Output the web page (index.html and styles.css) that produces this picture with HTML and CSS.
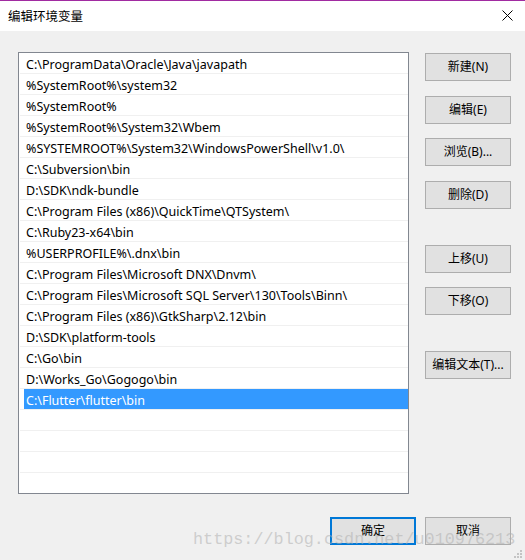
FILE: index.html
```html
<!DOCTYPE html>
<html lang="zh-CN">
<head>
<meta charset="utf-8">
<title>编辑环境变量</title>
<link rel="stylesheet" href="styles.css">
</head>
<body>
<div class="window">
  <div class="titlebar">
    <span class="title">编辑环境变量</span>
    <span class="close" aria-label="关闭">
      <svg width="11" height="11" viewBox="0 0 11 11"><path d="M0.5 0.5 L10.5 10.5 M10.5 0.5 L0.5 10.5" stroke="#000" stroke-width="1" fill="none"/></svg>
    </span>
  </div>
  <div class="content">
    <div class="main">
      <div class="list">
        <div class="row"><span class="cell">C:\ProgramData\Oracle\Java\javapath</span></div>
        <div class="row"><span class="cell">%SystemRoot%\system32</span></div>
        <div class="row"><span class="cell">%SystemRoot%</span></div>
        <div class="row"><span class="cell">%SystemRoot%\System32\Wbem</span></div>
        <div class="row"><span class="cell">%SYSTEMROOT%\System32\WindowsPowerShell\v1.0\</span></div>
        <div class="row"><span class="cell">C:\Subversion\bin</span></div>
        <div class="row"><span class="cell">D:\SDK\ndk-bundle</span></div>
        <div class="row"><span class="cell">C:\Program Files (x86)\QuickTime\QTSystem\</span></div>
        <div class="row"><span class="cell">C:\Ruby23-x64\bin</span></div>
        <div class="row"><span class="cell">%USERPROFILE%\.dnx\bin</span></div>
        <div class="row"><span class="cell">C:\Program Files\Microsoft DNX\Dnvm\</span></div>
        <div class="row"><span class="cell">C:\Program Files\Microsoft SQL Server\130\Tools\Binn\</span></div>
        <div class="row"><span class="cell">C:\Program Files (x86)\GtkSharp\2.12\bin</span></div>
        <div class="row"><span class="cell">D:\SDK\platform-tools</span></div>
        <div class="row"><span class="cell">C:\Go\bin</span></div>
        <div class="row"><span class="cell">D:\Works_Go\Gogogo\bin</span></div>
        <div class="row selected"><span class="cell">C:\Flutter\flutter\bin</span></div>
        <div class="row"><span class="cell"></span></div>
        <div class="row"><span class="cell"></span></div>
        <div class="row"><span class="cell"></span></div>
        <div class="row last"><span class="cell"></span></div>
      </div>
      <div class="side">
        <button class="btn b-new">新建(N)</button>
        <button class="btn b-edit">编辑(E)</button>
        <button class="btn b-browse">浏览(B)...</button>
        <button class="btn b-del">删除(D)</button>
        <button class="btn b-up">上移(U)</button>
        <button class="btn b-down">下移(O)</button>
        <button class="btn b-text">编辑文本(T)...</button>
      </div>
    </div>
    <div class="footer">
      <button class="btn default">确定</button>
      <button class="btn">取消</button>
    </div>
  </div>
  <div class="watermark">https://blog.csdn.net/u010976213</div>
  <svg class="grip" width="10" height="10" viewBox="0 0 10 10">
    <rect x="7" y="1" width="2" height="2" fill="#c4c4c4"/>
    <rect x="4" y="4" width="2" height="2" fill="#c4c4c4"/>
    <rect x="7" y="4" width="2" height="2" fill="#c4c4c4"/>
    <rect x="1" y="7" width="2" height="2" fill="#c4c4c4"/>
    <rect x="4" y="7" width="2" height="2" fill="#c4c4c4"/>
    <rect x="7" y="7" width="2" height="2" fill="#c4c4c4"/>
  </svg>
</div>
</body>
</html>
```
FILE: styles.css
```css
* { box-sizing: border-box; }
html, body { margin: 0; padding: 0; }
body {
  width: 525px;
  height: 560px;
  overflow: hidden;
  background: #f0f0f0;
  font-family: "Noto Sans", "Noto Sans CJK SC", sans-serif;
  font-size: 12px;
  color: #000;
}
.window {
  position: relative;
  width: 525px;
  height: 560px;
  display: flex;
  flex-direction: column;
  background: #f0f0f0;
}
.titlebar {
  height: 31px;
  flex: none;
  background: #fff;
  border-top: 1px solid #a12ba1;
  display: flex;
  align-items: center;
  justify-content: space-between;
  padding: 0 12px 0 8px;
}
.title {
  font-family: "Noto Sans CJK SC", sans-serif;
  font-size: 12.5px;
  line-height: 16px;
  margin-top: -1px;
}
.close { display: flex; width: 11px; height: 11px; margin-top: -1px; }
.content {
  flex: 1;
  display: flex;
  flex-direction: column;
  padding: 21px 14px 0 18px;
}
.main { display: flex; align-items: flex-start; }
.list {
  width: 391px;
  height: 442px;
  border: 1px solid #828790;
  background: #fff;
  overflow: hidden;
}
.row {
  height: 21px;
  margin-left: 1px;
  border-bottom: 1px solid #f0f0f0;
}
.cell {
  display: block;
  height: 20px;
  line-height: 20px;
  padding-top: 2px;
  padding-left: 6px;
  font-size: 12.5px;
  white-space: nowrap;
}
.row.selected .cell {
  margin-left: 4px;
  padding-left: 2px;
  background: #3399ff;
  color: #fff;
}
.side {
  display: flex;
  flex-direction: column;
  margin-left: 16px;
  padding-top: 1px;
}
.btn {
  width: 86px;
  height: 28px;
  padding: 0;
  border: 1px solid #adadad;
  background: #e1e1e1;
  color: #000;
  font-family: "Noto Sans", "Noto Sans CJK SC", sans-serif;
  font-size: 12px;
  line-height: 16px;
  border-radius: 0;
}
.b-edit { margin-top: 15px; }
.b-browse { margin-top: 14px; }
.b-del { margin-top: 15px; }
.b-up { margin-top: 36px; }
.b-down { margin-top: 14px; }
.b-text { margin-top: 36px; }
.footer {
  display: flex;
  justify-content: flex-end;
  gap: 9px;
  margin-top: 23px;
}
.btn.default { border: 2px solid #0078d7; }
.watermark {
  position: absolute;
  left: 193px;
  top: 530px;
  font-family: "Liberation Mono", monospace;
  font-size: 16.8px;
  line-height: 20px;
  color: rgba(175, 175, 175, 0.55);
  white-space: nowrap;
  pointer-events: none;
}
.grip { position: absolute; right: 2px; bottom: 1px; }
```
